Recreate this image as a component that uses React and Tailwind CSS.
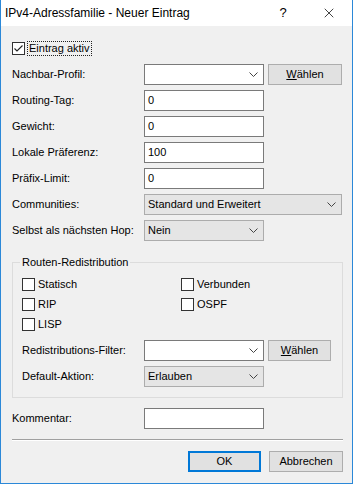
import { X } from 'lucide-react';

const font = { fontFamily: '"Liberation Sans", Arial, sans-serif' };

function Chevron() {
  return (
    <svg width="9" height="5" viewBox="0 0 9 5" className="shrink-0">
      <path d="M0.5 0.5 L4.5 4.5 L8.5 0.5" fill="none" stroke="#444" strokeWidth="1" />
    </svg>
  );
}

function TextBox({ value = '', w = 'w-[120px]' }) {
  return (
    <div className={`${w} h-[21px] bg-white border border-[#7a7a7a] flex items-center px-[3px] text-[11px] text-black`}>
      {value}
    </div>
  );
}

function Combo({ value = '', w = 'w-[120px]', editable = false }) {
  const cls = editable ? 'bg-white border-[#7a7a7a]' : 'bg-[#e5e5e5] border-[#acacac]';
  return (
    <div className={`${w} h-[21px] border ${cls} flex items-center justify-between pl-[3px] pr-[5px] text-[11px] text-black`}>
      <span>{value}</span>
      <Chevron />
    </div>
  );
}

function Btn({ children, w = 'w-[74px]', primary = false }) {
  return (
    <div
      className={`${w} h-[21px] flex items-center justify-center text-[11px] text-black bg-[#e1e1e1] ${
        primary ? 'border-2 border-[#0078d7]' : 'border border-[#adadad]'
      }`}
    >
      {children}
    </div>
  );
}

function Waehlen({ w }) {
  return (
    <Btn w={w}>
      <span><span className="underline">W</span>ählen</span>
    </Btn>
  );
}

function CheckBox({ label, checked = false, focus = false }) {
  return (
    <div className="flex items-center h-[14px]">
      <div className="w-[13px] h-[13px] bg-white border border-[#333] flex items-center justify-center shrink-0">
        {checked && (
          <svg width="11" height="11" viewBox="0 0 11 11">
            <path d="M1.5 5.5 L4 8 L9.5 2.5" fill="none" stroke="#222" strokeWidth="1.1" />
          </svg>
        )}
      </div>
      <span
        className={`ml-[3px] text-[11px] text-black leading-[13px] ${
          focus ? 'outline outline-1 outline-dotted outline-[#222] px-[1px]' : ''
        }`}
      >
        {label}
      </span>
    </div>
  );
}

function Row({ label, children, labelW = 'w-[132px]' }) {
  return (
    <div className="flex items-center">
      <div className={`${labelW} text-[11px] text-black shrink-0`}>{label}</div>
      <div className="flex items-center gap-[4px]">{children}</div>
    </div>
  );
}

export default function App() {
  return (
    <div style={font} className="w-[353px] h-[484px] bg-[#f0f0f0] border-x border-b border-[#2b88d8] flex flex-col overflow-hidden">
      {/* Titelleiste */}
      <div className="h-[26px] bg-white flex items-center shrink-0">
        <div className="pl-[4px] text-[12px] text-black flex-1">IPv4-Adressfamilie - Neuer Eintrag</div>
        <div className="w-[46px] text-center text-[13px] text-black">?</div>
        <div className="w-[46px] flex justify-center">
          <X className="w-[16px] h-[16px] text-black" strokeWidth={1.1} />
        </div>
      </div>

      <div className="flex flex-col pl-[11px] pr-[10px]">
        <div className="pt-[15px]">
          <CheckBox label="Eintrag aktiv" checked focus />
        </div>

        <div className="mt-[9px] flex flex-col gap-[5px]">
          <Row label="Nachbar-Profil:">
            <Combo editable />
            <Waehlen w="w-[74px]" />
          </Row>
          <Row label="Routing-Tag:"><TextBox value="0" /></Row>
          <Row label="Gewicht:"><TextBox value="0" /></Row>
          <Row label="Lokale Präferenz:"><TextBox value="100" /></Row>
          <Row label="Präfix-Limit:"><TextBox value="0" /></Row>
          <Row label="Communities:"><Combo value="Standard und Erweitert" w="w-[198px]" /></Row>
          <Row label="Selbst als nächsten Hop:"><Combo value="Nein" /></Row>
        </div>

        {/* Gruppe */}
        <div className="mt-[21px] w-[331px] h-[136px] border border-[#dcdcdc] relative pl-[9px] pt-[14px]">
          <div className="absolute -top-[8px] left-[7px] px-[2px] bg-[#f0f0f0] text-[11px] text-black leading-[14px]">
            Routen-Redistribution
          </div>
          <div className="grid grid-cols-[159px_1fr] gap-y-[6px]">
            <CheckBox label="Statisch" />
            <CheckBox label="Verbunden" />
            <CheckBox label="RIP" />
            <CheckBox label="OSPF" />
            <CheckBox label="LISP" />
          </div>
          <div className="mt-[9px] flex flex-col gap-[5px]">
            <Row label="Redistributions-Filter:" labelW="w-[122px]">
              <Combo editable />
              <Waehlen w="w-[63px]" />
            </Row>
            <Row label="Default-Aktion:" labelW="w-[122px]"><Combo value="Erlauben" /></Row>
          </div>
        </div>

        <div className="mt-[10px]">
          <Row label="Kommentar:"><TextBox /></Row>
        </div>

        <div className="mt-[10px] w-[331px] h-[2px] border-t border-[#a0a0a0] border-b border-b-white" />

        <div className="mt-[10px] flex justify-end gap-[8px] w-[331px]">
          <Btn w="w-[73px]" primary>OK</Btn>
          <Btn w="w-[74px]">Abbrechen</Btn>
        </div>
      </div>
    </div>
  );
}
